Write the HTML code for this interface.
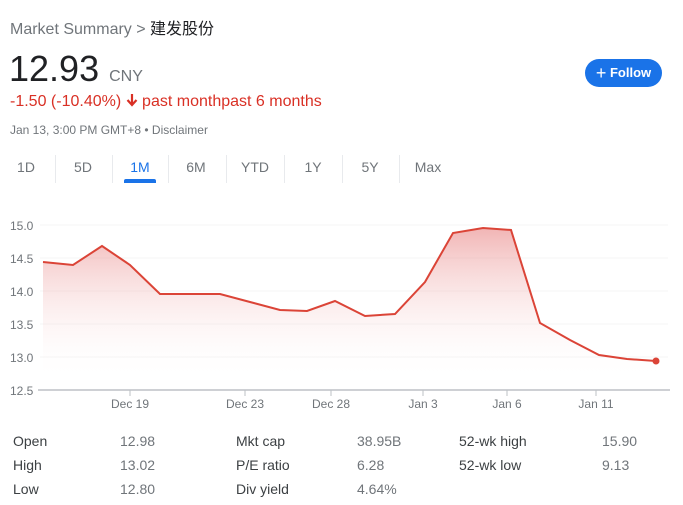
<!DOCTYPE html>
<html><head><meta charset="utf-8"><style>
body{margin:0;width:683px;height:505px;background:#fff;font-family:"Liberation Sans","Noto Sans CJK SC",sans-serif;position:relative;overflow:hidden}
.a{position:absolute;white-space:nowrap}
.t{position:absolute;top:159px;font-size:14px;color:#70757a;transform:translateX(-50%)}
.sep{position:absolute;top:155px;width:1px;height:28px;background:#e8eaed}
.s{position:absolute;font-size:14px;color:#3c4043}
.v{position:absolute;font-size:14px;color:#70757a}
</style></head><body>
<div class="a" style="left:10px;top:15px;font-size:16px;color:#70757a">Market Summary &gt; <span style="color:#202124">建发股份</span></div>
<div class="a" style="left:9px;top:48px;font-size:36px;color:#202124">12.93 <span style="font-size:16px;color:#70757a">CNY</span></div>
<div class="a" style="left:10px;top:93px;font-size:16px;color:#d93025">-1.50 (-10.40%) <svg width="12" height="14" viewBox="0 0 12 14" style="vertical-align:-1px"><path d="M6 1v10M1.5 7l4.5 5 4.5-5" stroke="#d93025" stroke-width="2.2" fill="none"/></svg> past monthpast 6 months</div>
<div class="a" style="left:10px;top:123px;font-size:12px;color:#70757a">Jan 13, 3:00 PM GMT+8 • Disclaimer</div>
<div class="a" style="left:585px;top:59px;width:77px;height:28px;border-radius:14px;background:#1a73e8;color:#fff;font-size:13px;line-height:28px;text-align:center;font-weight:bold"><span style="font-size:18px;font-weight:normal;vertical-align:-2px">+</span> Follow</div>
<div class="t" style="left:26px">1D</div><div class="t" style="left:83px">5D</div><div class="t" style="left:140px;color:#1a73e8">1M</div><div class="t" style="left:196px">6M</div><div class="t" style="left:255px">YTD</div><div class="t" style="left:313px">1Y</div><div class="t" style="left:370px">5Y</div><div class="t" style="left:428px">Max</div>
<div class="sep" style="left:55px"></div><div class="sep" style="left:112px"></div><div class="sep" style="left:168px"></div><div class="sep" style="left:226px"></div><div class="sep" style="left:284px"></div><div class="sep" style="left:342px"></div><div class="sep" style="left:399px"></div>
<div class="a" style="left:124px;top:179px;width:32px;height:4px;border-radius:2px 2px 0 0;background:#1a73e8"></div>
<svg class="a" style="left:0;top:200px" width="683" height="220" viewBox="0 200 683 220">
<defs><linearGradient id="g" gradientUnits="userSpaceOnUse" x1="0" y1="225" x2="0" y2="380"><stop offset="0" stop-color="#e57373" stop-opacity=".55"/><stop offset="1" stop-color="#fff" stop-opacity="0"/></linearGradient></defs>
<g stroke="#f5f5f5" stroke-width="1"><line x1="40" x2="668" y1="225" y2="225"/><line x1="40" x2="668" y1="258" y2="258"/><line x1="40" x2="668" y1="291" y2="291"/><line x1="40" x2="668" y1="324" y2="324"/><line x1="40" x2="668" y1="357" y2="357"/></g>
<g font-size="12" fill="#70757a" font-family="Liberation Sans"><text x="10" y="230">15.0</text><text x="10" y="263">14.5</text><text x="10" y="296">14.0</text><text x="10" y="329">13.5</text><text x="10" y="362">13.0</text><text x="10" y="395">12.5</text>
<g text-anchor="middle"><text x="130" y="408">Dec 19</text><text x="245" y="408">Dec 23</text><text x="331" y="408">Dec 28</text><text x="423" y="408">Jan 3</text><text x="507" y="408">Jan 6</text><text x="596" y="408">Jan 11</text></g></g>
<path d="M43 262L73 265L102 246L130 265L160 294L220 294L250 302L280 310L307 311L335 301L365 316L395 314L425 282L453 233L483 228L511 230L540 323L570 340L599 355L627 359L656 361L656 390L43 390Z" fill="url(#g)"/>
<path d="M43 262L73 265L102 246L130 265L160 294L220 294L250 302L280 310L307 311L335 301L365 316L395 314L425 282L453 233L483 228L511 230L540 323L570 340L599 355L627 359L656 361" fill="none" stroke="#db4437" stroke-width="2"/>
<circle cx="656" cy="361" r="3.5" fill="#db4437"/>
<line x1="38" x2="670" y1="390" y2="390" stroke="#bdc1c6" stroke-width="1.5"/>
<g stroke="#bdc1c6"><line x1="130" x2="130" y1="390" y2="396"/><line x1="245" x2="245" y1="390" y2="396"/><line x1="331" x2="331" y1="390" y2="396"/><line x1="423" x2="423" y1="390" y2="396"/><line x1="507" x2="507" y1="390" y2="396"/><line x1="596" x2="596" y1="390" y2="396"/></g>
</svg>
<div class="s" style="left:13px;top:433px">Open</div><div class="v" style="left:120px;top:433px">12.98</div>
<div class="s" style="left:13px;top:457px">High</div><div class="v" style="left:120px;top:457px">13.02</div>
<div class="s" style="left:13px;top:481px">Low</div><div class="v" style="left:120px;top:481px">12.80</div>
<div class="s" style="left:236px;top:433px">Mkt cap</div><div class="v" style="left:357px;top:433px">38.95B</div>
<div class="s" style="left:236px;top:457px">P/E ratio</div><div class="v" style="left:357px;top:457px">6.28</div>
<div class="s" style="left:236px;top:481px">Div yield</div><div class="v" style="left:357px;top:481px">4.64%</div>
<div class="s" style="left:459px;top:433px">52-wk high</div><div class="v" style="left:602px;top:433px">15.90</div>
<div class="s" style="left:459px;top:457px">52-wk low</div><div class="v" style="left:602px;top:457px">9.13</div>
</body></html>
